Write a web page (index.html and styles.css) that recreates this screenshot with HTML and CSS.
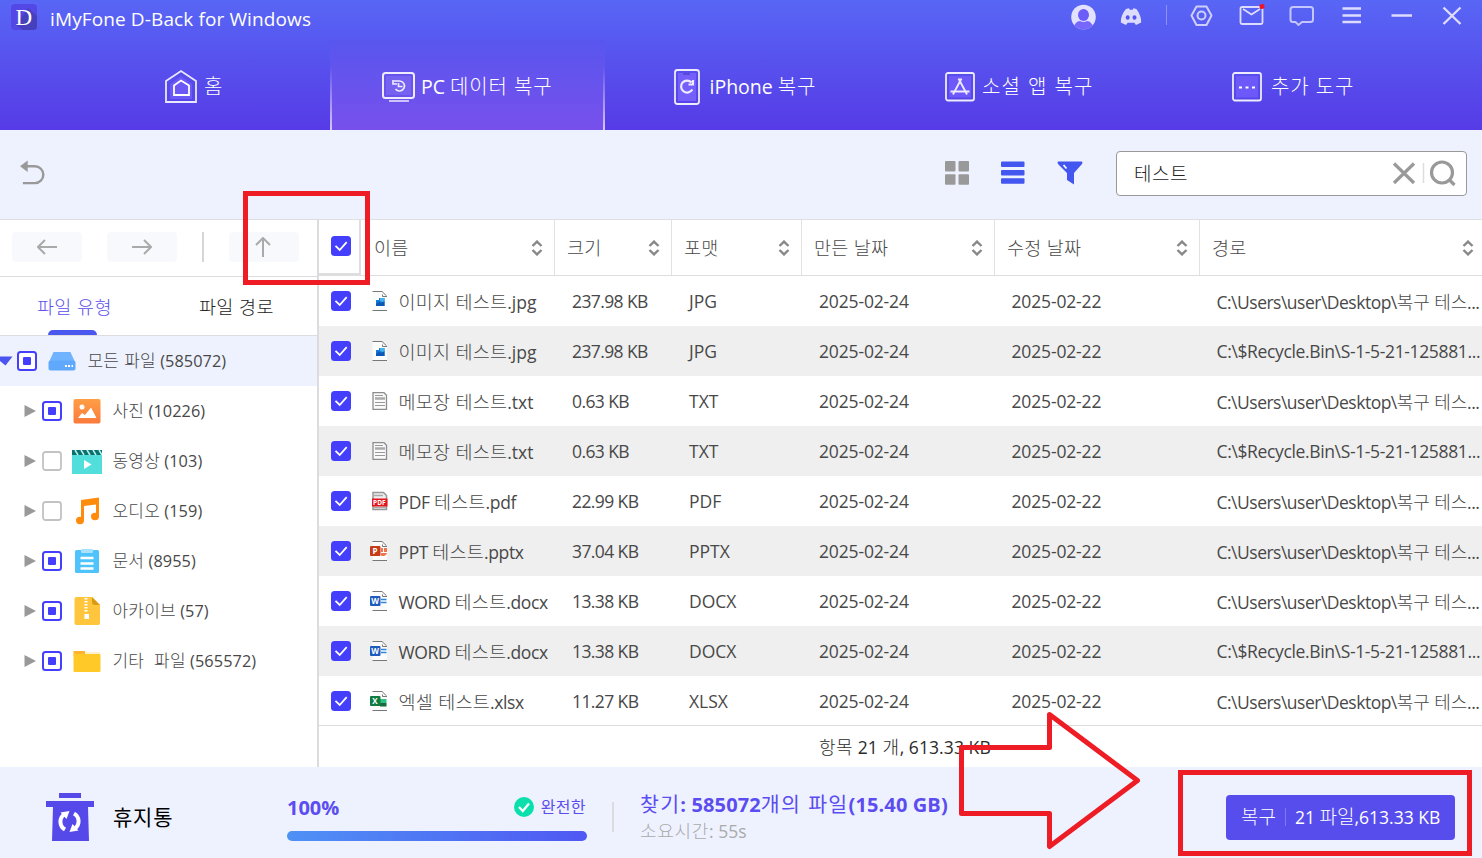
FILE: index.html
```html
<!DOCTYPE html>
<html lang="ko">
<head>
<meta charset="utf-8">
<title>iMyFone D-Back for Windows</title>
<link rel="stylesheet" href="styles.css">
</head>
<body>
<svg class="defs" width="0" height="0">
  <defs>
    <linearGradient id="g-photo" x1="0" y1="0" x2="0" y2="1"><stop offset="0" stop-color="#ff9f46"/><stop offset="1" stop-color="#fa7a3c"/></linearGradient>
    <symbol id="check" viewBox="0 0 20 20"><rect width="20" height="20" rx="3.5" fill="#433ffc"/><path d="M4.5 9.8l4.2 4.2 7-7.8" fill="none" stroke="#fff" stroke-width="1.8"/></symbol>
    <symbol id="partial" viewBox="0 0 20 20"><rect x="1" y="1" width="18" height="18" rx="2.5" fill="#fff" stroke="#433ffc" stroke-width="2"/><rect x="6" y="6" width="8" height="8" rx="1" fill="#433ffc"/></symbol>
    <symbol id="empty" viewBox="0 0 20 20"><rect x="1" y="1" width="18" height="18" rx="2.5" fill="#fff" stroke="#c3c3c3" stroke-width="1.8"/></symbol>
    <symbol id="tri" viewBox="0 0 12 12"><path d="M.5 0L12 6 .5 12z" fill="#999"/></symbol>
    <symbol id="sort" viewBox="0 0 12 16"><path d="M1.5 6L6 1.6 10.5 6M1.5 10L6 14.4 10.5 10" fill="none" stroke="#888" stroke-width="2.4"/></symbol>
    <symbol id="page" viewBox="0 0 18 20"><path d="M2.5.5H12l5 5v14H2.5z" fill="#fcfcfc"/><path d="M2.500.5H12l4.500 4.300M12.500 3.500v2h4.500M2.500 19.500H17" fill="none" stroke="#777" stroke-width="1"/></symbol>
    <symbol id="f-jpg" viewBox="0 0 18 20"><use href="#page" width="18" height="20"/><rect x="6" y="7" width="8.500" height="8" fill="#1679d8"/><path d="M6 15v-2l3-2.500 2 1.500 3.500-2V15z" fill="#0b59b4"/><path d="M10 7h4.500v3l-2 1-2.500-1z" fill="#45b4ee"/><path d="M6 7h3v2H6z" fill="#fff"/></symbol>
    <symbol id="f-txt" viewBox="0 0 18 20"><path d="M3 1.700h11l2.500 2.500V18.300H3z" fill="#fafafa" stroke="#8d8d8d" stroke-width="1.300"/><path d="M5 4.500h8M5 11.500h10M5 14.500h10" stroke="#999" stroke-width="1"/><path d="M5 7.500h10" stroke="#aaa" stroke-width="2.500"/></symbol>
    <symbol id="f-pdf" viewBox="0 0 18 20"><path d="M3 1.500h10.500L16.500 4.500V18.500H3z" fill="#eee" stroke="#969696" stroke-width="1.500"/><path d="M4 4.500h9M4 16.500h12" stroke="#aaa" stroke-width="1.500"/><rect x="2" y="7.500" width="15.500" height="8" fill="#e5141c"/><text x="3.100" y="13.900" class="pdf-t">PDF</text></symbol>
    <symbol id="f-ppt" viewBox="0 0 18 20"><use href="#page" width="18" height="20"/><path d="M11 7h6v4h-6zM11 12h6a4 4 0 0 1-6 2.500z" fill="#f17350"/><path d="M13.500 7v4.500h4" fill="none" stroke="#fff"/><rect y="5" width="10.500" height="10" rx="1" fill="#c43d1b"/><text x="2.600" y="13" class="office-t">P</text></symbol>
    <symbol id="f-doc" viewBox="0 0 18 20"><use href="#page" width="18" height="20"/><path d="M11 8.500h5.500M11 11.500h5.500" stroke="#2b86df" stroke-width="1.300"/><rect y="5" width="10.500" height="10" rx="1" fill="#1e5bbd"/><text x="1.200" y="13" class="office-t">W</text></symbol>
    <symbol id="f-xls" viewBox="0 0 18 20"><use href="#page" width="18" height="20"/><path d="M10 8h6.500v4H10z" fill="#2fc285"/><path d="M10 12h6.500v3.500H10z" fill="#17693e"/><rect y="5" width="10.500" height="10" rx="1" fill="#107c41"/><text x="2.200" y="13" class="office-t">X</text></symbol>
  </defs>
</svg>

<header class="top">
  <div class="titlebar">
    <svg width="26" height="26" viewBox="0 0 26 26"><rect width="26" height="26" rx="4" fill="#5348e5"/><path d="M17 4l9 8v10a4 4 0 0 1-4 4H12L5 21z" fill="#4740bd"/><text x="4.500" y="20.500" class="logo-t">D</text></svg>
    <h1>iMyFone D-Back for Windows</h1>
    <div class="win-icons">
      <svg width="420" height="32" viewBox="1062 0 420 32" fill="none" stroke="#dddcff" stroke-width="2">
        <clipPath id="av"><circle cx="1083.500" cy="17" r="12.300"/></clipPath>
        <g clip-path="url(#av)" stroke="none"><rect x="1071" y="4" width="25" height="26" fill="#e2e1ff"/><ellipse cx="1083.500" cy="15" rx="5.500" ry="6" fill="#6c5cf8"/><path d="M1073 30c1-6 4-9 7-9q3.500 2 7 0c3 0 6 3 7 9z" fill="#7767fb"/></g>
        <path d="M1126 9l3-.8.8 1.600h2.800l.8-1.600 3 .8c3 4 5 8.500 4.800 13.500l-5.200 2.500-1.700-2.200h-6.600l-1.700 2.200-5.200-2.500c-.2-5 1.800-9.500 5.200-13.500z" fill="#dddcff" stroke="none"/><ellipse cx="1127.700" cy="17.500" rx="2" ry="2.300" fill="#5556ef" stroke="none"/><ellipse cx="1134.500" cy="17.500" rx="2" ry="2.300" fill="#5556ef" stroke="none"/>
        <path d="M1166.500 5v20" stroke="#8e92f6" stroke-width="1"/>
        <path d="M1196.500 6.500h10l5 9-5 9.500h-10l-5-9.500z" stroke-linejoin="round" stroke="#cfcffd"/><circle cx="1201.500" cy="15.500" r="4" stroke="#cfcffd"/>
        <rect x="1240.500" y="7" width="22" height="17" rx="1.500" stroke-width="1.800"/><path d="M1243 9l8.500 5.500L1260 9" stroke-width="1.800"/><circle cx="1262" cy="6.500" r="2.500" fill="#f21224" stroke="none"/>
        <path d="M1293 7h17.500q2.500 0 2.500 2.500v10q0 2.500-2.500 2.500H1302l-3.500 3-3-3H1293q-2.500 0-2.500-2.500v-10q0-2.500 2.500-2.500z" stroke="#c4c6fc"/>
        <path d="M1342.500 8.500h18.500M1342.500 15.500h18.500M1342.500 22h18.500" stroke-width="2.400"/>
        <path d="M1391.500 15.500h20.500M1443.500 7.500l17 16.500M1460.500 7.500l-17 16.500" stroke-width="2.400"/>
      </svg>
    </div>
  </div>
  <nav class="nav">
    <a class="tab t1"><svg width="34" height="36" viewBox="0 0 34 36" fill="none" stroke="#e9e7ff" stroke-width="1.800"><path d="M2 12L17 2l15 10v21H2z"/><path d="M6 15l11-8 11 8v15H6z" fill="#6b58f6" stroke="none"/><path d="M10 16.500l7-5 8 5V26H10z" stroke="#fff"/></svg><span><span class="k">홈</span></span></a>
    <a class="tab t2 active"><svg width="34" height="34" viewBox="0 0 34 34" fill="none" stroke="#eeeaff" stroke-width="2"><rect x="1" y="3" width="31" height="25" rx="2.500"/><rect x="4" y="6" width="25" height="19" fill="#7562f0" stroke="none"/><path d="M7 31h20" stroke-width="1.500"/><path d="M12 11h5.500a5 5 0 1 1-4 8M11 10v4h4M16.500 13v3.500h4" stroke-width="1.700"/></svg><span>PC <span class="k">데이터 복구</span></span></a>
    <a class="tab t3"><svg width="28" height="38" viewBox="0 0 28 38" fill="none" stroke="#eeeaff" stroke-width="1.800"><rect x="2" y="2" width="24" height="34" rx="2.500"/><rect x="5" y="5" width="18" height="28" fill="#755ffb" stroke="none"/><path d="M10 6h7" stroke="#5847d8"/><path d="M18.500 14.500a6 6 0 1 0 .8 7M20 12v4.500h-4.500" stroke-width="2.200"/></svg><span>iPhone <span class="k">복구</span></span></a>
    <a class="tab t4"><svg width="30" height="32" viewBox="0 0 30 32" fill="none" stroke="#eeeaff" stroke-width="1.800"><rect x="1" y="2" width="28" height="27.500" rx="2"/><rect x="4" y="5" width="22" height="21.500" fill="#6d59fa" stroke="none"/><path d="M5.500 20.500h19M13.500 7.500l8.500 16M16.500 7.500L8 23.500"/></svg><span><span class="k">소셜 앱 복구</span></span></a>
    <a class="tab t5"><svg width="30" height="32" viewBox="0 0 30 32" fill="none" stroke="#eeeaff" stroke-width="1.800"><rect x="1" y="2" width="28" height="27.500" rx="2"/><rect x="4" y="5" width="22" height="21.500" fill="#6d59fa" stroke="none"/><path d="M7 16.500h3M13.500 16.500h3M20 16.500h3" stroke="#fff" stroke-width="2.200"/></svg><span><span class="k">추가 도구</span></span></a>
  </nav>
</header>

<section class="tools">
  <svg width="25" height="28" viewBox="0 0 26 28"><path d="M6 7h9.500a8.500 8.500 0 0 1 0 17.500H3" fill="none" stroke="#999" stroke-width="2.500"/><path d="M0 7l8-6v12z" fill="#999"/></svg>
  <div class="views">
    <svg width="24" height="24" viewBox="0 0 24 24" fill="#999"><rect width="10.500" height="10.500" rx="1"/><rect x="13.500" width="10.500" height="10.500" rx="1"/><rect y="13.300" width="10.500" height="10.500" rx="1"/><rect x="13.500" y="13.300" width="10.500" height="10.500" rx="1"/></svg>
    <svg width="24" height="24" viewBox="0 0 24 24" fill="#4456f0"><rect y=".5" width="23.500" height="5.500" rx="1"/><rect y="9" width="23.500" height="5.500" rx="1"/><rect y="17.300" width="23.500" height="5.500" rx="1"/></svg>
    <svg width="26" height="24" viewBox="0 0 26 24"><path d="M1 .5h24q1 1 0 2.500L17 12v11.500L10 19v-7L1 3Q0 1 1 .5z" fill="#4456f0"/><path d="M6.500 4l3 3.500" stroke="#fff" stroke-width="1.800"/></svg>
  </div>
  <div class="search">
    <span class="query"><span class="k">테스트</span></span>
    <svg width="64" height="28" viewBox="0 0 64 28" fill="none" stroke="#999" stroke-width="3.200"><path d="M2 4.500l20 19.500M22 4.500L2 24"/><path d="M31.500 4v20" stroke="#ddd" stroke-width="1.500"/><circle cx="50" cy="13.500" r="10.500"/><path d="M57 20.500l5.500 5.500"/></svg>
  </div>
</section>

<main class="main">
  <aside class="side">
    <div class="history">
      <span class="hbtn"><svg width="20" height="16" viewBox="0 0 20 16"><path d="M1 8h19M8 1L1 8l7 7"/></svg></span>
      <span class="hbtn"><svg width="20" height="16" viewBox="0 0 20 16"><path d="M0 8h19M12 1l7 7-7 7"/></svg></span>
      <i></i>
      <span class="hbtn up"><svg width="16" height="20" viewBox="0 0 16 20"><path d="M8 1v19M1 8l7-7 7 7"/></svg></span>
    </div>
    <div class="stabs"><span class="on"><span class="k">파일 유형</span></span><span><span class="k">파일 경로</span></span></div>
    <ul class="tree">
      <li class="root"><svg class="arrow" width="13" height="10" viewBox="0 0 13 10"><path d="M0 .5h12.500L5.500 9.500 0 5z" fill="#4a55f0"/></svg><svg width="20" height="20"><use href="#partial"/></svg><svg class="ti" width="30" height="30" viewBox="0 0 30 30"><path d="M6.500 6h17l4 9h-25z" fill="#70b4ff"/><rect x="1.500" y="14.500" width="27" height="10" rx="2" fill="#5fa8fb"/><path d="M18 20h2M21 20h2M24.500 20h1.500" stroke="#fff" stroke-width="2"/></svg><span class="lbl"><span class="k">모든 파일</span> (585072)</span></li>
      <li><svg class="arrow" width="12" height="12"><use href="#tri"/></svg><svg width="20" height="20"><use href="#partial"/></svg><svg class="ti" width="30" height="30" viewBox="0 0 30 30"><rect x="1.500" y="3" width="27" height="24.500" rx="2" fill="url(#g-photo)"/><circle cx="10" cy="11" r="2.500" fill="#fff"/><path d="M6 22l4-5 3 2 6-7.500L24.500 22z" fill="#fff"/></svg><span class="lbl"><span class="k">사진</span> (10226)</span></li>
      <li><svg class="arrow" width="12" height="12"><use href="#tri"/></svg><svg width="20" height="20"><use href="#empty"/></svg><svg class="ti" width="30" height="30" viewBox="0 0 30 30"><rect y="8" width="30" height="20" fill="#52dfdb"/><path d="M0 4h30v5H0z" fill="#0b716f"/><path d="M3 4l3 5M9 4l3 5M15 4l3 5M21 4l3 5M27 4l3 5" stroke="#baf0ee" stroke-width="1.500"/><path d="M12 14v9l7.500-4.500z" fill="#fff"/></svg><span class="lbl"><span class="k">동영상</span> (103)</span></li>
      <li><svg class="arrow" width="12" height="12"><use href="#tri"/></svg><svg width="20" height="20"><use href="#empty"/></svg><svg class="ti" width="30" height="30" viewBox="0 0 30 30"><path d="M9 4L27 1.500V20h-3V8.500L12 10v14H9z" fill="#ff8a0c"/><ellipse cx="8" cy="24.500" rx="4" ry="3.700" fill="#ff8a0c"/><ellipse cx="23" cy="20.500" rx="4" ry="3.700" fill="#ff8a0c"/></svg><span class="lbl"><span class="k">오디오</span> (159)</span></li>
      <li><svg class="arrow" width="12" height="12"><use href="#tri"/></svg><svg width="20" height="20"><use href="#partial"/></svg><svg class="ti" width="30" height="30" viewBox="0 0 30 30"><rect x="3" y="4" width="24" height="23" rx="1.500" fill="#4fc3fb"/><rect x="9" y="3" width="12" height="4" rx="1" fill="#a9e1fd"/><path d="M8.500 12h13M8.500 17.500h13M8.500 22.500h13" stroke="#fff" stroke-width="2.500"/></svg><span class="lbl"><span class="k">문서</span> (8955)</span></li>
      <li><svg class="arrow" width="12" height="12"><use href="#tri"/></svg><svg width="20" height="20"><use href="#partial"/></svg><svg class="ti" width="30" height="30" viewBox="0 0 30 30"><path d="M4.500 1H20l8 8v18q0 2-2 2H4.500q-2 0-2-2V3q0-2 2-2z" fill="#ffc63d"/><path d="M20 1l8 8h-5q-3 0-3-3z" fill="#d99b12"/><path d="M14 2v14" stroke="#fff" stroke-width="3" stroke-dasharray="1.500 1.500"/><rect x="12.500" y="18" width="4.500" height="5" fill="#fff"/></svg><span class="lbl"><span class="k">아카이브</span> (57)</span></li>
      <li><svg class="arrow" width="12" height="12"><use href="#tri"/></svg><svg width="20" height="20"><use href="#partial"/></svg><svg class="ti" width="30" height="30" viewBox="0 0 30 30"><path d="M13 6h15v4H13z" fill="#fff1cd"/><path d="M1.500 5H13v5H1.500z" fill="#ffb32f"/><rect x="1.500" y="8" width="27" height="18" rx="1" fill="#ffca28"/></svg><span class="lbl"><span class="k">기타&nbsp; 파일</span> (565572)</span></li>
    </ul>
  </aside>

  <section class="table">
    <div class="row head">
      <span class="cb"><svg width="20" height="20"><use href="#check"/></svg></span>
      <span class="hn"><span class="k">이름</span><svg width="12" height="16"><use href="#sort"/></svg></span>
      <span><span class="k">크기</span><svg width="12" height="16"><use href="#sort"/></svg></span>
      <span><span class="k">포맷</span><svg width="12" height="16"><use href="#sort"/></svg></span>
      <span><span class="k">만든 날짜</span><svg width="12" height="16"><use href="#sort"/></svg></span>
      <span><span class="k">수정 날짜</span><svg width="12" height="16"><use href="#sort"/></svg></span>
      <span class="hp"><span class="k">경로</span><svg width="12" height="16"><use href="#sort"/></svg></span>
    </div>
    <div class="row"><svg class="c" width="20" height="20"><use href="#check"/></svg><svg class="f" width="18" height="20"><use href="#f-jpg"/></svg><span><span class="k">이미지 테스트</span>.jpg</span><span class="s">237.98 KB</span><span>JPG</span><span class="d">2025-02-24</span><span class="d">2025-02-22</span><span class="p">C:\Users\user\Desktop\<span class="k">복구 테스</span>...</span></div>
    <div class="row"><svg class="c" width="20" height="20"><use href="#check"/></svg><svg class="f" width="18" height="20"><use href="#f-jpg"/></svg><span><span class="k">이미지 테스트</span>.jpg</span><span class="s">237.98 KB</span><span>JPG</span><span class="d">2025-02-24</span><span class="d">2025-02-22</span><span class="p r">C:\$Recycle.Bin\S-1-5-21-125881...</span></div>
    <div class="row"><svg class="c" width="20" height="20"><use href="#check"/></svg><svg class="f" width="18" height="20"><use href="#f-txt"/></svg><span><span class="k">메모장 테스트</span>.txt</span><span class="s">0.63 KB</span><span>TXT</span><span class="d">2025-02-24</span><span class="d">2025-02-22</span><span class="p">C:\Users\user\Desktop\<span class="k">복구 테스</span>...</span></div>
    <div class="row"><svg class="c" width="20" height="20"><use href="#check"/></svg><svg class="f" width="18" height="20"><use href="#f-txt"/></svg><span><span class="k">메모장 테스트</span>.txt</span><span class="s">0.63 KB</span><span>TXT</span><span class="d">2025-02-24</span><span class="d">2025-02-22</span><span class="p r">C:\$Recycle.Bin\S-1-5-21-125881...</span></div>
    <div class="row"><svg class="c" width="20" height="20"><use href="#check"/></svg><svg class="f" width="18" height="20"><use href="#f-pdf"/></svg><span class="w">PDF <span class="k">테스트</span>.pdf</span><span class="s">22.99 KB</span><span>PDF</span><span class="d">2025-02-24</span><span class="d">2025-02-22</span><span class="p">C:\Users\user\Desktop\<span class="k">복구 테스</span>...</span></div>
    <div class="row"><svg class="c" width="20" height="20"><use href="#check"/></svg><svg class="f" width="18" height="20"><use href="#f-ppt"/></svg><span class="w">PPT <span class="k">테스트</span>.pptx</span><span class="s">37.04 KB</span><span>PPTX</span><span class="d">2025-02-24</span><span class="d">2025-02-22</span><span class="p">C:\Users\user\Desktop\<span class="k">복구 테스</span>...</span></div>
    <div class="row"><svg class="c" width="20" height="20"><use href="#check"/></svg><svg class="f" width="18" height="20"><use href="#f-doc"/></svg><span class="w">WORD <span class="k">테스트</span>.docx</span><span class="s">13.38 KB</span><span>DOCX</span><span class="d">2025-02-24</span><span class="d">2025-02-22</span><span class="p">C:\Users\user\Desktop\<span class="k">복구 테스</span>...</span></div>
    <div class="row"><svg class="c" width="20" height="20"><use href="#check"/></svg><svg class="f" width="18" height="20"><use href="#f-doc"/></svg><span class="w">WORD <span class="k">테스트</span>.docx</span><span class="s">13.38 KB</span><span>DOCX</span><span class="d">2025-02-24</span><span class="d">2025-02-22</span><span class="p r">C:\$Recycle.Bin\S-1-5-21-125881...</span></div>
    <div class="row"><svg class="c" width="20" height="20"><use href="#check"/></svg><svg class="f" width="18" height="20"><use href="#f-xls"/></svg><span class="w"><span class="k">엑셀 테스트</span>.xlsx</span><span class="s">11.27 KB</span><span>XLSX</span><span class="d">2025-02-24</span><span class="d">2025-02-22</span><span class="p">C:\Users\user\Desktop\<span class="k">복구 테스</span>...</span></div>
    <div class="summary"><span class="k">항목</span> 21 <span class="k">개</span>, 613.33 KB</div>
  </section>
</main>

<footer class="bottom">
  <svg class="bin" width="48" height="48" viewBox="0 0 48 48"><path d="M13 0h22v5H13zM0 8h48v6h-6l1 34H6L7 14H0z" fill="#5549ea"/><path d="M18 21.500a9 9 0 0 0 1 15M29 35.500a9 9 0 0 0-1-15" fill="none" stroke="#fff" stroke-width="4"/><path d="M14.500 19.500l9-1.500-3 8zM32.500 37.500l-9 1.500 3-8z" fill="#fff"/></svg>
  <span class="place"><span class="k">휴지통</span></span>
  <div class="progress">
    <div class="pline"><strong>100%</strong><span class="done"><svg width="20" height="20" viewBox="0 0 20 20"><circle cx="10" cy="10" r="10" fill="#0be0ac"/><path d="M5 10l3.800 4L15 6.500" fill="none" stroke="#fff" stroke-width="2.200"/></svg><span class="k">완전한</span></span></div>
    <div class="bar"></div>
  </div>
  <i class="sep"></i>
  <div class="found"><div class="f1"><span class="k">찾기</span>: 585072<span class="k">개의 파일</span>(15.40 GB)</div><div class="f2"><span class="k">소요시간</span>: 55s</div></div>
  <button class="recover"><span class="k">복구</span><i></i><span class="amount">21 <span class="k">파일</span>,613.33 KB</span></button>
</footer>

<svg class="marks" width="1482" height="858" viewBox="0 0 1482 858"><g fill="none" stroke="#ee1c24" stroke-width="5"><rect x="245.500" y="193.500" width="122" height="89"/><rect x="1180.500" y="772.500" width="289" height="81"/><path d="M961.500 747.500H1049.500V714.500L1137.500 780.500 1049.500 846.500V813.500H961.500z" stroke-linejoin="round"/></g></svg>
</body>
</html>
```
FILE: styles.css
```css
* { box-sizing: border-box; }
body { margin: 0; width: 1482px; height: 858px; overflow: hidden; position: relative; display: flex; flex-direction: column; background: #fff; color: #484848; font-family: "Open Sans", "Noto Sans CJK KR", sans-serif; font-size: 17.5px; line-height: 24px; white-space: nowrap; }
svg { display: block; flex: none; }
i { font-style: normal; flex: none; }
.defs, .marks { position: absolute; left: 0; top: 0; pointer-events: none; }
.k { font-family: "Noto Sans CJK KR", sans-serif; font-weight: 300; }
.office-t { font: bold 8px "Open Sans", sans-serif; fill: #fff; }
.pdf-t { font: bold 6.5px "Open Sans", sans-serif; fill: #fff; }
.logo-t { font: 23px "Liberation Serif", serif; fill: #fff; }

.top { height: 130px; flex: none; background: linear-gradient(#5866f5, #563be6); color: #fff; display: flex; flex-direction: column; }
.titlebar { height: 40px; flex: none; display: flex; align-items: flex-start; padding: 4px 0 0 11px; }
h1 { margin: 3px 0 0 13px; font-size: 19px; font-weight: 400; line-height: 24px; letter-spacing: .12px; }
.win-icons { margin: -4px 0 0 auto; }
.nav { height: 90px; display: flex; }
.tab { display: flex; align-items: center; font-size: 19.5px; padding-top: 3px; }
.tab > span { margin-left: 7px; }
.tab .k { font-size: 20px; letter-spacing: .8px; }
.t1 { width: 330px; padding-left: 164px; }
.t1 > span { margin-left: 6px; }
.t2 { width: 275px; padding-left: 50px; }
.t2 > span { margin-left: 5px; }
.t3 { width: 270px; padding-left: 68px; }
.t3 > span { margin-left: 8.5px; }
.t4 { width: 290px; padding-left: 70px; }
.t4 .k { letter-spacing: 1.2px; }
.t5 { padding-left: 67px; }
.t5 > span { margin-left: 9px; }
.active { border: solid transparent; border-width: 0 2px; border-image: linear-gradient(transparent 30%, #d6c8fb) 1; background: linear-gradient(#5856ee, #7850ec); }

.tools { height: 89px; flex: none; background: #eef2ff; display: flex; align-items: center; padding: 0 15px 3px 20px; }
.views { display: flex; gap: 32px; margin-left: auto; margin-right: 33px; }
.search { width: 351px; height: 45px; background: #fff; border: 1px solid #999; border-radius: 4px; display: flex; align-items: center; justify-content: space-between; padding: 0 10px 0 17px; color: #222; }
.search .k { font-size: 19px; letter-spacing: .5px; }

.main { height: 548px; flex: none; display: flex; }
.side { width: 319px; flex: none; border-top: 1px solid #dcdce0; border-right: 2px solid #dcdcde; }
.history { height: 57px; border-bottom: 1px solid #dcdce0; display: flex; align-items: center; padding: 0 0 3px 12px; }
.hbtn { width: 70px; height: 30px; background: #f8f9fd; border-radius: 4px; display: flex; align-items: center; justify-content: center; margin-right: 25px; }
.hbtn.up { margin: 0; }
.hbtn.up svg { margin-right: 2px; }
.hbtn path { fill: none; stroke: #aaa; stroke-width: 2; }
.history i { width: 2px; height: 30px; background: #d6d6d8; margin-right: 25px; }
.stabs { height: 59px; border-bottom: 1px solid #dcdce0; display: flex; align-items: stretch; padding-left: 37px; color: #222; }
.stabs > span { flex: none; width: 118px; padding-top: 17px; position: relative; }
.stabs > .on { width: 162px; }
.stabs .k { font-size: 18.5px; letter-spacing: .3px; }
.stabs .on { color: #5b50ea; }
.stabs .on::after { content: ""; position: absolute; left: 11px; bottom: 0; width: 49px; height: 5px; border-radius: 5px 5px 0 0; background: #4a58ef; }
.tree { list-style: none; margin: 0; padding: 0; }
.tree li { height: 50px; display: flex; align-items: center; padding-left: 24px; font-size: 16.3px; }
.lbl { padding-bottom: 2px; letter-spacing: .08px; }
.tree .k { font-size: 17px; letter-spacing: .2px; }
.tree .arrow { margin-right: 6px; }
.tree .root { padding-left: 0; background: #eef2ff; }
.tree .root .arrow { margin-right: 4px; }
.ti { margin: 0 10.500px 0 10px; }

.table { flex: 1; min-width: 0; }
.row { height: 50px; display: grid; grid-template-columns: 50px 29.500px 173.500px 117px 130px 192.500px 205px 1fr; align-items: center; }
.row > .c { margin-left: 12px; }
.row:nth-child(odd):not(.head) { background: #efefef; }
.row .k { font-size: 18.5px; letter-spacing: .2px; }
.row .f { margin-left: 1px; }
.s { letter-spacing: -.6px; }
.d { letter-spacing: -.15px; }
.w { letter-spacing: -.35px; }
.p { letter-spacing: -.5px; }
.row .p .k { font-size: 18px; letter-spacing: -.2px; }
.row .r { letter-spacing: -.36px; }
.head { height: 57px; grid-template-columns: 42px 194px 117px 130px 193px 205px 1fr; align-items: stretch; border-top: 1px solid #e0e0e4; border-bottom: 1px solid #dedede; }
.head > span { display: flex; align-items: center; justify-content: space-between; padding: 0 11px 0 12px; border-right: 1px solid #e2e2e4; }
.head .k { padding-bottom: 2px; }
.head > .hn { padding-left: 13px; }
.head > .cb { padding: 0 0 1px 12px; border-right: 2px solid #dedee0; border-bottom: 2px solid #dedee0; }
.head > .hp { padding-right: 8px; border: 0; }
.summary { height: 42px; margin-top: -1px; border-top: 1px solid #dcdcdc; padding: 8px 0 0 500px; color: #2b2b2b; letter-spacing: .08px; }
.summary .k { font-size: 18px; letter-spacing: .5px; }

.bottom { height: 91px; flex: none; background: #eef2ff; display: flex; align-items: flex-start; padding-left: 46px; }
.bin { margin-top: 26px; }
.place { margin: 37px 0 0 19px; width: 174px; color: #000; }
.place .k { font-size: 21px; font-weight: 400; letter-spacing: .8px; }
.progress { width: 300px; margin-top: 28px; }
.pline { display: flex; justify-content: space-between; align-items: center; color: #5b4df0; }
.pline strong { font-size: 20px; padding-top: 1px; line-height: 23px; }
.done { display: flex; gap: 7px; margin-right: 1px; }
.done .k { font-size: 16px; font-weight: 400; line-height: 19px; letter-spacing: .4px; }
.bar { height: 10px; margin-top: 12px; border-radius: 5px; background: linear-gradient(90deg, #4f91f5, #5058f3); }
.sep { width: 2px; height: 30px; margin: 35px 26px 0 25px; background: #dcdcdf; }
.found { margin-top: 24px; }
.f1 { color: #5b4df0; font-size: 20px; font-weight: 700; letter-spacing: .12px; }
.f1 .k { font-size: 20.5px; letter-spacing: 1.3px; font-weight: 400; }
.f2 { color: #aaa; font-size: 17.5px; line-height: 26px; }
.f2 .k { font-size: 18px; letter-spacing: .7px; }
.recover { margin: 28px 27px 0 auto; width: 229px; height: 45px; border: 0; border-radius: 4px; background: #574cec; color: #fff; display: flex; align-items: center; padding: 0 0 5px 15px; font: 17.5px "Open Sans", sans-serif; white-space: nowrap; }
.recover .k { font-size: 19px; }
.recover i { width: 1px; height: 18px; margin: 3px 9px 0; background: #8078f1; }
```
